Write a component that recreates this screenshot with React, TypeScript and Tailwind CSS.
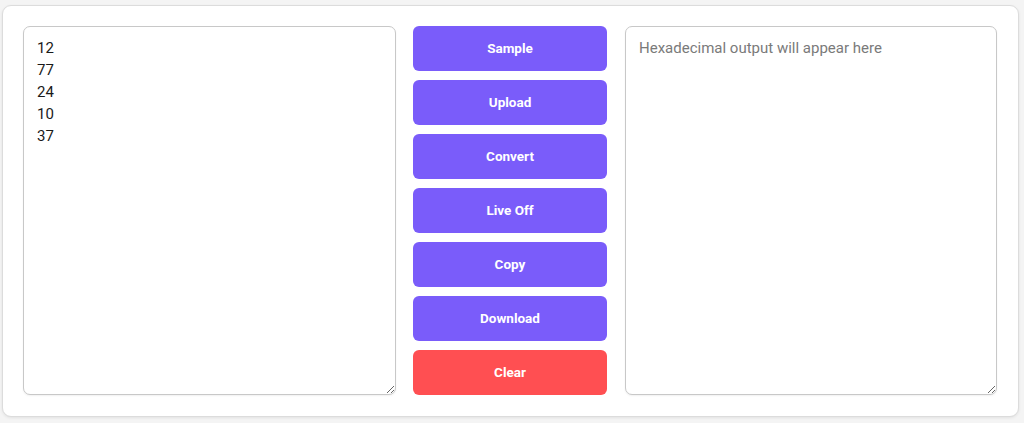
import React from "react";

const buttons = ["Sample", "Upload", "Convert", "Live Off", "Copy", "Download"];

export default function App() {
  return (
    <div
      className="w-[1024px] h-[423px] bg-[#f4f4f4] pt-[5px] pl-[2px] overflow-hidden"
      style={{ fontFamily: "Roboto, 'Liberation Sans', sans-serif" }}
    >
      <div className="w-[1017px] h-[412px] bg-white rounded-[9px] border border-[#dcdcdc] shadow-[0_1px_3px_rgba(0,0,0,0.08)] px-[20px] pt-[20px] pb-[21px] grid grid-cols-[373px_194px_372px] gap-x-[17px]">
        <textarea
          className="h-[369px] w-full rounded-[7px] border border-[#c8c8c8] bg-white px-[13px] py-[10px] text-[15px] leading-[22px] text-[#1a1a1a] outline-none shadow-[0_1px_2px_rgba(0,0,0,0.06)]"
          defaultValue={"12\n77\n24\n10\n37"}
          style={{ fontFamily: "Roboto, 'Liberation Sans', sans-serif" }}
        />
        <div className="flex flex-col gap-[9px]">
          {buttons.map((b) => (
            <button
              key={b}
              className="h-[45px] w-full rounded-[6px] bg-[#7a5cfa] text-white text-[13.5px] font-bold"
            >
              {b}
            </button>
          ))}
          <button className="h-[45px] w-full rounded-[6px] bg-[#ff4f52] text-white text-[13.5px] font-bold">
            Clear
          </button>
        </div>
        <textarea
          className="ml-px h-[369px] w-full rounded-[7px] border border-[#c8c8c8] bg-white px-[13px] py-[10px] text-[15px] leading-[22px] text-[#1a1a1a] placeholder:text-[#7a7a7a] outline-none shadow-[0_1px_2px_rgba(0,0,0,0.06)]"
          placeholder="Hexadecimal output will appear here"
          style={{ fontFamily: "Roboto, 'Liberation Sans', sans-serif" }}
        />
      </div>
    </div>
  );
}
